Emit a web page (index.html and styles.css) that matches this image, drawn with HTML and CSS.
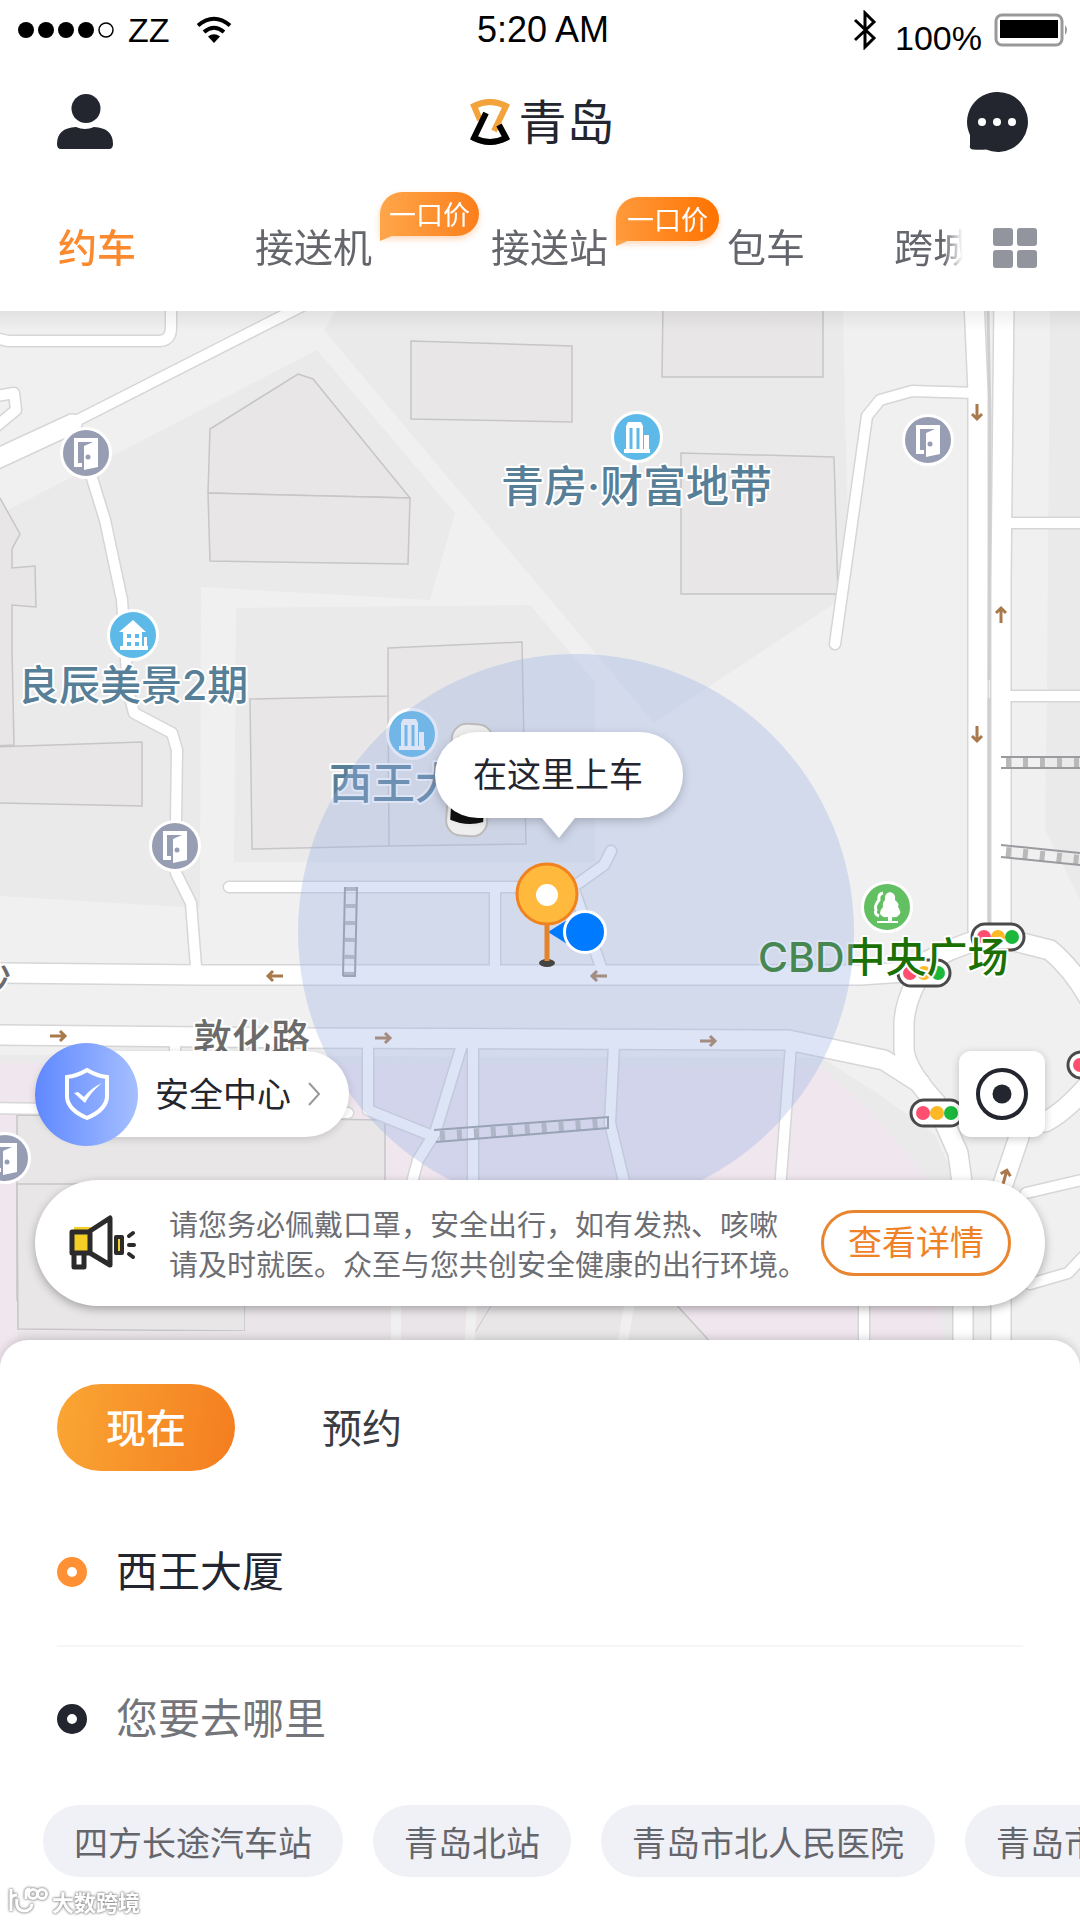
FILE: index.html
```html
<!DOCTYPE html>
<html lang="zh-CN">
<head>
    <meta charset="UTF-8">
    <meta name="viewport" content="width=device-width, initial-scale=1.0">
    <title>约车</title>
    <link rel="stylesheet" href="styles.css">
</head>
<body>
    <header class="header">
        <!-- Status bar -->
        <div class="status">
            <div class="status-left">
                <svg width="104" height="20" viewBox="0 0 104 20">
                    <circle cx="10" cy="10" r="8"/><circle cx="30" cy="10" r="8"/><circle cx="50" cy="10" r="8"/><circle cx="70" cy="10" r="8"/>
                    <circle cx="90" cy="10" r="7" fill="none" stroke="#000" stroke-width="1.5"/>
                </svg>
                <span>ZZ</span>
                <svg class="wifi" width="36" height="28" viewBox="0 0 36 28" fill="none" stroke="#000" stroke-width="4">
                    <path d="M2 9.500Q18 -4 34 9.500M8 16Q18 7.500 28 16"/>
                    <path d="M18 27L12 20.500Q18 16 24 20.500Z" fill="#000" stroke="none"/>
                </svg>
            </div>
            <div>5:20 AM</div>
            <div class="status-right">
                <svg class="bluetooth" width="24" height="40" viewBox="0 0 24 40" fill="none" stroke="#000" stroke-width="3">
                    <path d="M2 10L21 28L12 37V3L21 12L2 30"/>
                </svg>
                <span class="percent">100%</span>
                <svg width="76" height="34" viewBox="0 0 76 34">
                    <rect x="2" y="2" width="66" height="30" rx="6" fill="none" stroke="#999" stroke-width="3"/>
                    <rect x="6" y="7" width="58" height="18"/>
                    <path d="M71 12Q75 17 71 22Z" fill="#999"/>
                </svg>
            </div>
        </div>

        <!-- Title bar -->
        <div class="titlebar">
            <button class="icon-btn" aria-label="我的">
                <svg width="56" height="56" viewBox="0 0 56 56" fill="#23252f">
                    <ellipse cx="29" cy="14.500" rx="14.500" ry="14.500"/>
                    <path d="M0 50Q0 34 19 33Q28 37 37 33Q56 34 56 50Q56 55 52 55H4Q0 55 0 50Z"/>
                </svg>
            </button>
            <div class="city">
                <svg width="40" height="46" viewBox="0 0 40 46" fill="none" stroke-width="6">
                    <path d="M10 21L4 7Q20 -1 36 7L24 32" stroke="#f3a33c"/>
                    <path d="M16 14L4 39Q20 47 36 39L29 26" stroke="#000"/>
                </svg>
                <span>青岛</span>
            </div>
            <button class="icon-btn" aria-label="消息">
                <svg width="62" height="62" viewBox="0 0 62 62">
                    <path d="M31 1A30 30 0 1 1 20 58.500Q16 59 7 58.500Q3 58 4 54L4 44A30 30 0 0 1 31 1Z" fill="#23252f"/>
                    <g fill="#fff"><circle cx="16" cy="31" r="4"/><circle cx="31" cy="31" r="4"/><circle cx="46" cy="31" r="4"/></g>
                </svg>
            </button>
        </div>

        <!-- Service tabs -->
        <nav class="nav">
            <div class="tabs">
                <a class="tab active" href="#">约车</a>
                <a class="tab" href="#">接送机<span class="tag">一口价</span></a>
                <a class="tab" href="#">接送站<span class="tag tag-deep">一口价</span></a>
                <a class="tab" href="#">包车</a>
                <a class="tab tab-last" href="#">跨城</a>
            </div>
            <button class="icon-btn" aria-label="全部">
                <svg width="44" height="40" viewBox="0 0 44 40" fill="#92959e">
                    <rect width="20" height="18" rx="3"/><rect x="24" width="20" height="18" rx="3"/>
                    <rect y="22" width="20" height="18" rx="3"/><rect x="24" y="22" width="20" height="18" rx="3"/>
                </svg>
            </button>
        </nav>
    </header>

    <main class="map">
        <svg class="map-canvas" viewBox="0 311 1080 1058" preserveAspectRatio="xMidYMin slice">
            <defs>
                <g id="door">
                    <circle r="24.500" fill="#979db2" stroke="#fff" stroke-width="3"/>
                    <path d="M-12 -15H12V14L-2 17V-7L7 -11H-8V10H-4V14H-12Z" fill="#fff"/>
                    <circle cx="2" cy="4" r="2.500" fill="#979db2"/>
                </g>
                <g id="tower">
                    <circle r="24.500" fill="#5cb9e8" stroke="#fff" stroke-width="3"/>
                    <path d="M-11 12V-11L-9 -15H4L6 -11V12H7V-2H12V12H13V16H-13V12Z" fill="#fff"/>
                    <path d="M-6 -9V12M1 -9V12" stroke="#5cb9e8" stroke-width="3"/>
                </g>
                <g id="arrow" fill="none" stroke="#a9794b" stroke-width="3">
                    <path d="M-8 0H7M2 -5L7 0L2 5"/>
                </g>
                <g id="light">
                    <rect x="-26" y="-13" width="52" height="26" rx="13" fill="#fff" stroke="#4a4a4a" stroke-width="3"/>
                    <circle cx="-14" r="7" fill="#ff4f70"/><circle r="7" fill="#fdb826"/><circle cx="14" r="7" fill="#1cb83c"/>
                </g>
                <linearGradient id="topShade" x2="0" y2="1">
                    <stop stop-color="#000" stop-opacity=".06"/><stop offset="1" stop-color="#000" stop-opacity="0"/>
                </linearGradient>
            </defs>

            <!-- Land blocks -->
            <rect y="311" width="1080" height="1058" fill="#f0f0f0"/>
            <g fill="#eaeaeb">
                <path d="M0 515L12 508L317 350L455 513L430 600L201 587L200 908L0 896Z"/>
                <path d="M335 311H843L845 417L850 593L654 723L324 330Z"/>
                <path d="M236 608L530 605L595 682V862H234Z"/>
                <path d="M1050 311H1080V900L1045 830L1047 690Z"/>
                <path d="M0 1055L822 1058L880 1095L935 1135L965 1200V1369H0Z"/>
            </g>
            <path d="M0 1063L820 1066L870 1110L929 1180L946 1369H0Z" fill="#f0e6ee"/>

            <!-- Buildings -->
            <g fill="#e8e6e7" stroke="#c6c6c8" stroke-width="1.500">
                <path d="M298 374L313 379L410 498L208 493L210 429Z"/>
                <path d="M208 493L410 498L408 564L210 561Z"/>
                <path d="M411 341L572 346V422L411 419Z"/>
                <path d="M663 305H823V377H662Z"/>
                <path d="M681 453L834 457L838 594H681Z"/>
                <path d="M-5 495L0 498L20 534L12 549V568L35 566L36 607L12 605V650L14 745L-5 746Z"/>
                <path d="M-5 747L142 742V806L-5 803Z"/>
                <path d="M388 648L522 642L526 844L389 846L252 849L250 699L388 696Z"/>
                <path d="M388 696L389 846"/>
                <path d="M17 1115L385 1120V1300H17Z"/>
                <path d="M17 1184H245V1331L18 1329Z"/>
                <path d="M494 1300H672L735 1369H460L470 1340Z"/>
            </g>
            <path d="M245 1300H494L470 1340V1369H18V1331H245Z" fill="#eae5e9"/>
            <path d="M396 1290V1369M473 1290L468 1369M632 1290L618 1369" stroke="#f1f0f0" stroke-width="10"/>

            <!-- Road casings, then road fills -->
            <g fill="none" stroke="#d6d6d8" stroke-linecap="round" stroke-linejoin="round">
                <g stroke-width="13">
                    <path d="M-10 337L8 341H160Q171 340 171 328V300"/>
                    <path d="M-10 397L14 393L16 410L-8 430"/>
                    <path d="M72 423L310 302"/>
                    <path d="M92 478L105 520L122 600L128 690L134 713L172 733L177 750L176 823L176 873L191 903L196 967"/>
                    <path d="M976 393L912 391L880 400L867 416L835 644"/>
                    <path d="M1005 523H1090M1005 696H1090"/>
                    <path d="M229 887H573L583 880L604 865L611 851M495 887V970M573 887L602 970"/>
                    <path d="M-10 1108L348 1113M368 1045V1110L430 1135M461 1048L435 1133L418 1160L410 1190M473 1045V1200M175 1040V1055"/>
                    <path d="M614 1045L610 1123L626 1190M791 1045L780 1190M864 1290V1375"/>
                    <path d="M1026 1193L1090 1178M1030 1284L1068 1273L1085 1255"/>
                </g>
                <g stroke-width="22">
                    <path d="M-10 462L72 424"/>
                    <path d="M-10 973L200 975H860L905 972L950 950L990 935L1050 950Q1080 975 1100 1020"/>
                    <path d="M-10 1035L300 1038L788 1040L884 1060L920 1083"/>
                    <path d="M917 980Q904 1005 904 1025V1050Q906 1070 936 1103L958 1153L963 1190V1375"/>
                    <path d="M974 300L978 393V930M1004 300L1001 580V930"/>
                    <path d="M1001 1375V1190L1019 1137M1045 1122Q1065 1112 1090 1083"/>
                </g>
            </g>
            <g fill="none" stroke="#fff" stroke-linecap="round" stroke-linejoin="round">
                <g stroke-width="10">
                    <path d="M-10 337L8 341H160Q171 340 171 328V300"/>
                    <path d="M-10 397L14 393L16 410L-8 430"/>
                    <path d="M72 423L310 302"/>
                    <path d="M92 478L105 520L122 600L128 690L134 713L172 733L177 750L176 823L176 873L191 903L196 967"/>
                    <path d="M976 393L912 391L880 400L867 416L835 644"/>
                    <path d="M1005 523H1090M1005 696H1090"/>
                    <path d="M229 887H573L583 880L604 865L611 851M495 887V970M573 887L602 970"/>
                    <path d="M-10 1108L348 1113M368 1045V1110L430 1135M461 1048L435 1133L418 1160L410 1190M473 1045V1200M175 1040V1055"/>
                    <path d="M614 1045L610 1123L626 1190M791 1045L780 1190M864 1290V1375"/>
                    <path d="M1026 1193L1090 1178M1030 1284L1068 1273L1085 1255"/>
                </g>
                <g stroke-width="19">
                    <path d="M-10 462L72 424"/>
                    <path d="M-10 973L200 975H860L905 972L950 950L990 935L1050 950Q1080 975 1100 1020"/>
                    <path d="M-10 1035L300 1038L788 1040L884 1060L920 1083"/>
                    <path d="M917 980Q904 1005 904 1025V1050Q906 1070 936 1103L958 1153L963 1190V1375"/>
                    <path d="M974 300L978 393V930M1004 300L1001 580V930"/>
                    <path d="M1001 1375V1190L1019 1137M1045 1122Q1065 1112 1090 1083"/>
                </g>
            </g>
            <path d="M988 311L990 420L989 680M989 698V925" fill="none" stroke="#cfcfd1" stroke-width="3"/>

            <!-- Footbridges -->
            <g fill="none">
                <g stroke="#b9b9b9" stroke-width="10">
                    <path d="M351 887L349 976" stroke-dasharray="4 13"/>
                    <path d="M1006 762H1080" stroke-dasharray="5 12"/>
                    <path d="M1006 852L1080 860" stroke-dasharray="5 12"/>
                    <path d="M440 1136L608 1123" stroke-dasharray="5 12"/>
                </g>
                <g stroke="#999b9f" stroke-width="2">
                    <path d="M345 887L343 976M357 887L355 976H343"/>
                    <path d="M1001 757H1080M1001 768H1080M1001 845L1080 853M1001 857L1080 865"/>
                    <path d="M434 1130L608 1117V1128L436 1142"/>
                </g>
            </g>

            <use href="#arrow" transform="translate(977 412) rotate(90)"/>
            <use href="#arrow" transform="translate(1001 615) rotate(-90)"/>
            <use href="#arrow" transform="translate(977 734) rotate(90)"/>
            <use href="#arrow" transform="translate(275 976) rotate(180)"/>
            <use href="#arrow" transform="translate(599 976) rotate(180)"/>
            <use href="#arrow" x="58" y="1036"/>
            <use href="#arrow" x="383" y="1038"/>
            <use href="#arrow" x="708" y="1041"/>
            <use href="#arrow" transform="translate(1005 1177) rotate(-75)"/>

            <!-- Places -->
            <use href="#door" x="86" y="453"/>
            <use href="#door" x="928" y="440"/>
            <use href="#door" x="175" y="846"/>
            <use href="#door" x="5" y="1158"/>
            <use href="#tower" x="637" y="437"/>
            <use href="#tower" x="412" y="734"/>
            <g transform="translate(133 635)">
                <circle r="24.500" fill="#5cb9e8" stroke="#fff" stroke-width="3"/>
                <path d="M0 -15L13 -3H9V11H11V2H14V11H15V15H-13V11H-10V-3H-14Z" fill="#fff"/>
                <path d="M-6 -1H-2V3H-6ZM2 -1H6V3H2ZM-6 7H-2V11H-6ZM2 7H6V11H2Z" fill="#5cb9e8"/>
            </g>
            <g transform="translate(887 907)">
                <circle r="24.500" fill="#62bf62" stroke="#fff" stroke-width="3"/>
                <path d="M3 -15Q9 -14 8 -7Q13 -3 11 0Q15 5 12 8Q10 11 5 10V14H11V16H-10V14H1V10Q-6 11 -7 6Q-7 3 -4 0Q-5 -4 -2 -7Q-3 -14 3 -15Z" fill="#fff"/>
                <path d="M-4 -14Q-9 -13 -8 -7Q-13 -1 -11 3Q-13 7 -8 9" fill="none" stroke="#fff" stroke-width="3"/>
            </g>
            <use href="#light" x="998" y="937"/>
            <use href="#light" x="924" y="973"/>
            <use href="#light" x="937" y="1113"/>
            <use href="#light" x="1094" y="1065"/>
            <g class="place">
                <text x="501" y="502">青房·财富地带</text>
                <text class="place-small" x="18" y="700">良辰美景2期</text>
                <text x="329" y="799">西王大</text>
                <text class="park" x="758" y="972">CBD中央广场</text>
                <text class="street" x="193" y="1052">敦化路</text>
                <text class="street" x="-28" y="992">沙</text>
            </g>

            <circle cx="576" cy="932" r="278" fill="#9ab1e5" fill-opacity=".35"/>

            <!-- Car -->
            <g transform="rotate(4 469 780)">
                <rect x="449" y="724" width="41" height="112" rx="15" fill="#eee" stroke="#bbb" stroke-width="2"/>
                <path d="M454 738Q469 730 485 738L481 750H458Z" fill="#ccc"/>
                <path d="M453 808L457 797H482L486 808V821Q470 827 453 821Z" fill="#111"/>
            </g>

            <!-- Pickup pin -->
            <path d="M548 932L575 915L572 947Z" fill="#007aff"/>
            <circle cx="585" cy="932" r="20.500" fill="#007aff" stroke="#fff" stroke-width="3"/>
            <ellipse cx="547" cy="963" rx="8" ry="4" fill="#444"/>
            <path d="M547 920V961" stroke="#e5832b" stroke-width="5"/>
            <circle cx="547" cy="894" r="30" fill="#ffb93c" stroke="#f0831f" stroke-width="3"/>
            <circle cx="547" cy="895" r="11" fill="#fff"/>
            <g class="callout">
                <path d="M478 732H640A43 43 0 0 1 640 818H575L559 838L542 818H478A43 43 0 0 1 478 732Z"/>
                <text x="558" y="787">在这里上车</text>
            </g>
            <rect y="311" width="1080" height="20" fill="url(#topShade)"/>
        </svg>

        <div class="map-tools">
            <a class="safety" href="#">
                <span class="safety-icon">
                    <svg width="46" height="54" viewBox="0 0 46 54" fill="none" stroke="#fff">
                        <path d="M23 3Q33 9 43 10V30Q42 43 23 51Q4 43 3 30V10Q13 9 23 3Z" stroke-width="4"/>
                        <path d="M10 26L14 25L20 30Q27 21 38 16Q27 25 21 36Z" fill="#fff" stroke="none"/>
                    </svg>
                </span>
                <span class="lift">安全中心</span>
                <svg class="chevron" width="14" height="26" viewBox="0 0 14 26" fill="none" stroke="#999" stroke-width="2"><path d="M2 2L12 13L2 24"/></svg>
            </a>
            <button class="locate" aria-label="定位">
                <svg width="54" height="54" viewBox="0 0 54 54"><circle cx="27" cy="27" r="24" fill="none" stroke="#23252f" stroke-width="4"/><circle cx="27" cy="27" r="9.500" fill="#23252f"/></svg>
            </button>
        </div>

        <div class="notice">
            <svg class="horn" width="68" height="56" viewBox="0 0 68 56" fill="none" stroke="#2b2b2b" stroke-width="4" stroke-linejoin="round" stroke-linecap="round">
                <path d="M5 12H22V38H5Z" fill="#f6cf26" stroke="none"/>
                <path d="M3 17H21V38H3ZM21 16L41 3V50L21 38M5 40V52H15V40" stroke-width="5"/>
                <path d="M47 22H53V38H47Z" fill="#f6cf26" stroke-width="4"/>
                <path d="M60 21L64 18M60 30H65M60 39L64 42"/>
            </svg>
            <p>请您务必佩戴口罩，安全出行，如有发热、咳嗽<br>请及时就医。众至与您共创安全健康的出行环境。</p>
            <button class="detail">查看详情</button>
        </div>
    </main>

    <section class="sheet">
        <div class="when">
            <button class="when-btn selected">现在</button>
            <button class="when-btn">预约</button>
        </div>
        <div class="field">
            <label class="ring from" for="from" aria-label="上车地点"></label>
            <input id="from" type="text" value="西王大厦">
        </div>
        <div class="field">
            <label class="ring" for="to" aria-label="目的地"></label>
            <input id="to" type="text" placeholder="您要去哪里">
        </div>
        <div class="chips">
            <button class="chip">四方长途汽车站</button>
            <button class="chip">青岛北站</button>
            <button class="chip">青岛市北人民医院</button>
            <button class="chip">青岛市立医院</button>
        </div>
        <div class="mark">
            <svg width="40" height="30" viewBox="0 0 40 30" fill="none" stroke="#fff" stroke-width="3">
                <path d="M3 3V25M3 13Q4 9 9 9M9 13Q7 24 16 25Q23 25 24 18M18 13V7Q18 3 22 3"/>
                <circle cx="25" cy="8" r="4.500"/><circle cx="34" cy="8" r="4.500"/>
            </svg>
            <span>大数跨境</span>
        </div>
    </section>
</body>
</html>
```
FILE: styles.css
```css
* {
    box-sizing: border-box;
}
body {
    margin: 0;
    min-height: 100vh;
    display: flex;
    flex-direction: column;
    overflow-x: hidden;
    background: #fff;
    color: #23252f;
    font-family: "Noto Sans CJK SC", sans-serif;
}
button, input {
    border: none;
    padding: 0;
    background: none;
    color: inherit;
    font-family: inherit;
}
a {
    color: inherit;
    text-decoration: none;
}
svg {
    display: block;
    flex-shrink: 0;
}
.icon-btn {
    display: block;
}

/* Header */
.header {
    position: relative;
    z-index: 1;
    background: #fff;
}
.status {
    display: grid;
    grid-template-columns: 1fr auto 1fr;
    align-items: center;
    height: 60px;
    padding: 0 10px 12px 16px;
    color: #000;
    font: 36px/48px "Liberation Sans", sans-serif;
}
.status-left, .status-right {
    display: flex;
    align-items: center;
    height: 60px;
    font-size: 34px;
}
.status-left {
    gap: 8px;
}
.wifi {
    margin-left: 18px;
}
.status-right {
    justify-content: flex-end;
    gap: 12px;
}
.bluetooth {
    margin-right: 6px;
}
.percent {
    padding-top: 16px;
}
.titlebar {
    display: flex;
    align-items: center;
    justify-content: space-between;
    height: 124px;
    padding: 0 52px 0 57px;
}
.city {
    display: flex;
    align-items: center;
    gap: 8px;
    padding-left: 6px;
    font-size: 48px;
    line-height: 60px;
}
.city span {
    padding-bottom: 6px;
}
.nav {
    display: flex;
    align-items: center;
    height: 127px;
    padding: 0 43px 0 58px;
}
.tabs {
    display: flex;
    flex: 1;
    gap: 119px;
    height: 127px;
    margin-right: 30px;
    overflow: hidden;
    line-height: 123px;
    -webkit-mask-image: linear-gradient(to left, transparent, #000 20px);
    mask-image: linear-gradient(to left, transparent, #000 20px);
}
.tab {
    position: relative;
    color: #65666c;
    font-size: 39px;
    white-space: nowrap;
}
.tab.active {
    color: #fb8a2e;
    font-weight: 500;
}
.tab-last {
    margin-left: -30px;
}
.tag {
    position: absolute;
    left: 125px;
    top: 8px;
    padding: 0 9px;
    border-radius: 22px 22px 22px 0;
    background: linear-gradient(90deg, #ffa64a, #fb7f1b);
    box-shadow: 0 3px 6px rgba(251, 127, 27, 0.3);
    color: #fff;
    font-size: 27px;
    line-height: 44px;
}
/* little tail under the left corner */
.tag::after {
    content: "";
    position: absolute;
    left: 0;
    top: 43px;
    border-top: 6px solid #ffa34a;
    border-right: 14px solid transparent;
}
.tag-deep {
    top: 13px;
    padding: 0 11px;
    background: linear-gradient(90deg, #ff9a3c, #ff7300);
}

/* Map */
.map {
    position: relative;
    display: flex;
    flex: 1;
    flex-direction: column;
    justify-content: flex-end;
    gap: 43px;
    min-height: 800px;
    margin-bottom: -28px;
    padding: 0 35px 62px;
    overflow: hidden;
}
.map-canvas {
    position: absolute;
    left: 0;
    top: 0;
    width: 100%;
    height: 100%;
}
.place text {
    fill: #577f97;
    stroke: #fff;
    stroke-width: 4px;
    stroke-linejoin: round;
    paint-order: stroke;
    font-family: Inter, "Noto Sans CJK SC", sans-serif;
    font-size: 43px;
    font-weight: 500;
}
.place .place-small {
    font-size: 41px;
}
.place .park {
    fill: #1b7003;
    font-size: 41px;
}
.place .street {
    fill: #6b6b6b;
    font-size: 39px;
}
.callout path {
    fill: #fff;
    filter: drop-shadow(0 3px 5px rgba(0, 0, 0, 0.2));
}
.callout text {
    fill: #23252f;
    font-size: 34px;
    text-anchor: middle;
}
.map-tools {
    position: relative;
    display: flex;
    align-items: center;
    justify-content: space-between;
    height: 86px;
}
.safety {
    display: flex;
    align-items: center;
    height: 86px;
    padding-right: 28px;
    border-radius: 43px;
    background: #fff;
    box-shadow: 0 2px 8px rgba(0, 0, 0, 0.15);
    font-size: 34px;
}
.safety-icon {
    display: flex;
    align-items: center;
    justify-content: center;
    width: 103px;
    height: 103px;
    margin-right: 17px;
    border-radius: 50%;
    background: linear-gradient(90deg, #5f88ff, #a5bfff);
}
.lift {
    padding-bottom: 4px;
}
.chevron {
    margin-left: 16px;
}
.locate {
    display: flex;
    align-items: center;
    justify-content: center;
    width: 86px;
    height: 86px;
    border-radius: 12px;
    background: #fff;
    box-shadow: 0 2px 8px rgba(0, 0, 0, 0.2);
}
.notice {
    position: relative;
    display: flex;
    align-items: center;
    height: 126px;
    padding: 0 34px;
    border-radius: 63px;
    background: #fff;
    box-shadow: 0 3px 10px rgba(0, 0, 0, 0.3);
}
.notice p {
    flex: 1;
    margin: 0 0 0 32px;
    color: #6d6e74;
    font-size: 29px;
    line-height: 40px;
    white-space: nowrap;
}
.detail {
    width: 190px;
    height: 66px;
    padding-bottom: 4px;
    border: 3px solid #e8852e;
    border-radius: 33px;
    color: #ef8226;
    font-size: 34px;
    line-height: 56px;
}

/* Order sheet */
.sheet {
    position: relative;
    z-index: 1;
    padding: 44px 57px 44px;
    border-radius: 28px 28px 0 0;
    background: #fff;
    box-shadow: 0 -2px 8px rgba(0, 0, 0, 0.15);
}
.when {
    display: flex;
    gap: 38px;
    margin-bottom: 28px;
}
.when-btn {
    width: 178px;
    height: 87px;
    padding-bottom: 4px;
    border-radius: 44px;
    color: #3b3c42;
    font-size: 40px;
}
.when-btn.selected {
    background: linear-gradient(100deg, #faa634, #f47d1f);
    color: #fff;
    font-weight: 500;
}
.field {
    display: flex;
    align-items: center;
    gap: 29px;
    height: 146px;
}
.field + .field {
    border-top: 2px solid #f6f6f7;
}
.ring {
    width: 30px;
    height: 30px;
    border: 10px solid #23252f;
    border-radius: 50%;
}
.ring.from {
    border-color: #ff9033;
}
.field input {
    flex: 1;
    height: 70px;
    padding-bottom: 7px;
    font-size: 42px;
    outline: none;
}
.field input::placeholder {
    color: #74757a;
    opacity: 1;
}
.chips {
    display: flex;
    gap: 30px;
    margin: 14px -57px 0 -14px;
    overflow: hidden;
}
.chip {
    flex-shrink: 0;
    height: 72px;
    padding: 0 31px;
    border-radius: 36px;
    background: #f0f1f6;
    color: #65666c;
    font-size: 34px;
    white-space: nowrap;
}
.mark {
    position: absolute;
    left: 8px;
    bottom: 4px;
    display: flex;
    align-items: center;
    gap: 4px;
    color: #fff;
    font-size: 22px;
    font-weight: 700;
    line-height: 32px;
    filter: drop-shadow(0 0 1px #888) drop-shadow(0 0 1px #aaa);
}
```
